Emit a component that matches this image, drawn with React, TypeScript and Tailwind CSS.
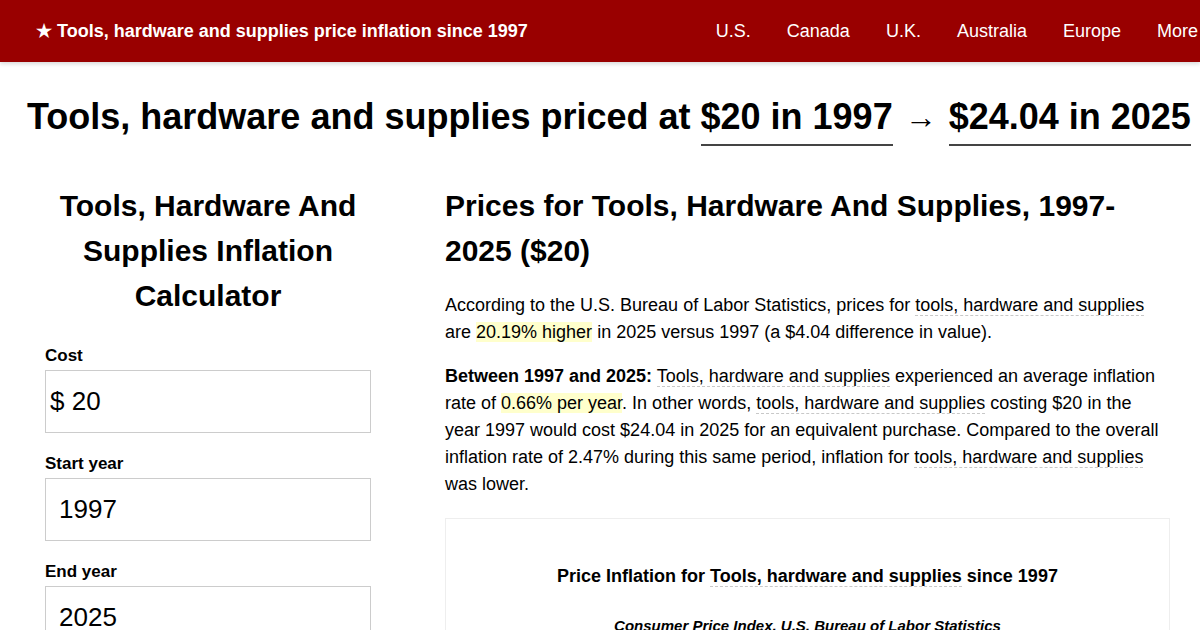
import React from 'react';

const navLinks = ['U.S.', 'Canada', 'U.K.', 'Australia', 'Europe', 'More'];

function Term(props: { children: React.ReactNode }) {
    return <span className="border-b border-dashed border-[#c8c8c8]">{props.children}</span>;
}

function Mark(props: { children: React.ReactNode }) {
    return <span className="bg-[#ffffcc]">{props.children}</span>;
}

function Field(props: { label: string, value: string, prefix?: string }) {
    return (
        <div className="mb-[19px]">
            <div className="text-[17px] font-bold leading-[24px] mb-[2px]">{props.label}</div>
            <div className="h-[63px] border border-[#cccccc] flex items-center text-[26px] text-black">
                {props.prefix ? (
                    <span className="pl-[4px]">{props.prefix} {props.value}</span>
                ) : (
                    <span className="pl-[13px]">{props.value}</span>
                )}
            </div>
        </div>
    );
}

export default function App() {
    return (
        <div className="w-[1200px] h-[630px] overflow-hidden bg-white text-black font-['Liberation_Sans',Arial,sans-serif]">
            <header className="h-[62px] bg-[#990000] flex items-center text-white shadow-[0_2px_4px_rgba(0,0,0,0.15)] relative">
                <div className="pl-[36px] text-[18px] font-bold whitespace-nowrap">★ Tools, hardware and supplies price inflation since 1997</div>
                <nav className="ml-auto mr-[2px] flex gap-[36px] text-[18px] whitespace-nowrap">
                    {navLinks.map((link) => (
                        <a key={link} className="text-white">{link}</a>
                    ))}
                </nav>
            </header>

            <h1 className="mt-[33px] pl-[27px] text-[36px] font-bold leading-[44px] whitespace-nowrap">
                Tools, hardware and supplies priced at{' '}
                <span className="border-b-2 border-[#444444] inline-block pb-[5px]">$20 in 1997</span>
                <span className="inline-block w-[56px] text-center font-normal text-[32px] align-[1px]">→</span>
                <span className="border-b-2 border-[#444444] inline-block pb-[5px]">$24.04 in 2025</span>
            </h1>

            <div className="flex mt-[37px]">
                <aside className="w-[326px] ml-[45px] shrink-0">
                    <h2 className="text-[30px] font-bold leading-[45px] text-center mb-[26px]">
                        Tools, Hardware And Supplies Inflation Calculator
                    </h2>
                    <Field label="Cost" prefix="$" value="20"/>
                    <Field label="Start year" value="1997"/>
                    <Field label="End year" value="2025"/>
                </aside>

                <main className="w-[725px] ml-[74px] shrink-0">
                    <h2 className="text-[30px] font-bold leading-[45px] mb-[19px]">
                        Prices for Tools, Hardware And Supplies, 1997-2025 ($20)
                    </h2>
                    <p className="text-[18px] leading-[27px] mb-[17px]">
                        According to the U.S. Bureau of Labor Statistics, prices for <Term>tools, hardware and supplies</Term> are <Mark>20.19% higher</Mark> in 2025 versus 1997 (a $4.04 difference in value).
                    </p>
                    <p className="text-[18px] leading-[27px] mb-[20px]">
                        <b>Between 1997 and 2025:</b> <Term>Tools, hardware and supplies</Term> experienced an average inflation rate of <Mark>0.66% per year</Mark>. In other words, <Term>tools, hardware and supplies</Term> costing $20 in the year 1997 would cost $24.04 in 2025 for an equivalent purchase. Compared to the overall inflation rate of 2.47% during this same period, inflation for <Term>tools, hardware and supplies</Term> was lower.
                    </p>
                    <section className="border border-[#eeeeee] h-[200px] pt-[44px] text-center">
                        <div className="text-[18px] font-bold leading-[26px]">
                            Price Inflation for <Term>Tools, hardware and supplies</Term> since 1997
                        </div>
                        <div className="mt-[26px] text-[15px] font-bold italic">
                            Consumer Price Index, U.S. Bureau of Labor Statistics
                        </div>
                    </section>
                </main>
            </div>
        </div>
    );
}
